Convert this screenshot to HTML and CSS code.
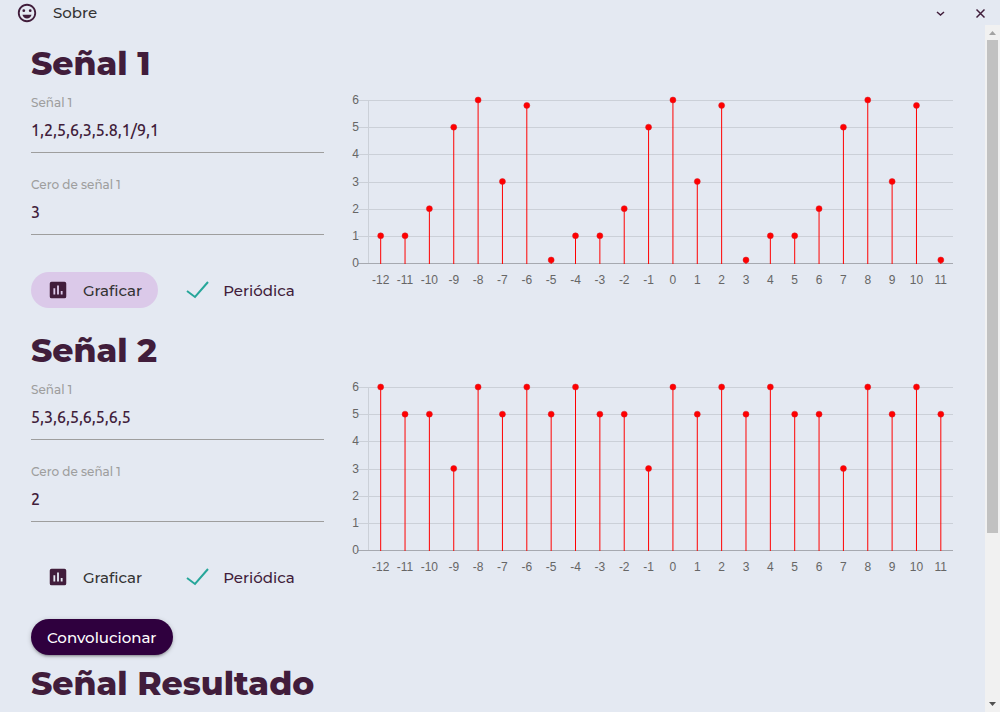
FILE: index.html
```html
<!DOCTYPE html>
<html lang="es">
<head>
<meta charset="utf-8">
<meta name="viewport" content="width=device-width, initial-scale=1">
<title>Convolución de señales</title>
<link rel="stylesheet" href="styles.css">
</head>
<body>
<header class="titlebar">
  <button class="about" type="button">
    <svg class="icon" viewBox="0 0 24 24" aria-hidden="true"><path d="M12 2C6.500 2 2 6.500 2 12s4.500 10 10 10 10-4.500 10-10S17.500 2 12 2zm0 18a8 8 0 1 1 0-16 8 8 0 0 1 0 16z"/><circle cx="8.500" cy="9.500" r="1.500"/><circle cx="15.500" cy="9.500" r="1.500"/><path d="M7 14h10c-.7 2.400-2.600 4-5 4s-4.300-1.600-5-4z"/></svg>
    <span>Sobre</span>
  </button>
  <div class="window-actions">
    <button class="window-button" type="button" aria-label="Minimizar"><svg viewBox="0 0 16 16"><path d="M5 7l3.500 3L12 7"/></svg></button>
    <button class="window-button" type="button" aria-label="Cerrar"><svg viewBox="0 0 16 16"><path d="m4.500 4.500 8 8M12.500 4.500l-8 8"/></svg></button>
  </div>
</header>
<div class="viewport">
  <main class="content">
    <section class="signal">
      <form class="controls">
        <h1 class="heading">Señal 1</h1>
        <div class="field">
          <label for="signal-1">Señal 1</label>
          <input id="signal-1" type="text" value="1,2,5,6,3,5.8,1/9,1">
        </div>
        <div class="field">
          <label for="zero-1">Cero de señal 1</label>
          <input id="zero-1" type="text" value="3">
        </div>
        <div class="actions">
          <button class="plot-button plot-button-active" type="button">
            <svg class="icon" viewBox="0 0 24 24" aria-hidden="true"><path fill-rule="evenodd" d="M19 3H5a2 2 0 0 0-2 2v14a2 2 0 0 0 2 2h14a2 2 0 0 0 2-2V5a2 2 0 0 0-2-2zM9 17H7v-7h2v7zm4 0h-2V7h2v10zm4 0h-2v-4h2v4z"/></svg>
            <span>Graficar</span>
          </button>
          <label class="check">
            <input type="checkbox" checked>
            <svg viewBox="0 0 24 18" aria-hidden="true"><path d="m1 10 8 6L22 1"/></svg>
            <span>Periódica</span>
          </label>
        </div>
      </form>
      <div class="plot"><svg class="chart" role="img" aria-label="Gráfica de la señal 1" data-values="1,2,5,6,3,5.8,0.11,1" data-zero="3"></svg></div>
    </section>
    <section class="signal">
      <form class="controls">
        <h1 class="heading">Señal 2</h1>
        <div class="field">
          <label for="signal-2">Señal 1</label>
          <input id="signal-2" type="text" value="5,3,6,5,6,5,6,5">
        </div>
        <div class="field">
          <label for="zero-2">Cero de señal 1</label>
          <input id="zero-2" type="text" value="2">
        </div>
        <div class="actions">
          <button class="plot-button" type="button">
            <svg class="icon" viewBox="0 0 24 24" aria-hidden="true"><path fill-rule="evenodd" d="M19 3H5a2 2 0 0 0-2 2v14a2 2 0 0 0 2 2h14a2 2 0 0 0 2-2V5a2 2 0 0 0-2-2zM9 17H7v-7h2v7zm4 0h-2V7h2v10zm4 0h-2v-4h2v4z"/></svg>
            <span>Graficar</span>
          </button>
          <label class="check">
            <input type="checkbox" checked>
            <svg viewBox="0 0 24 18" aria-hidden="true"><path d="m1 10 8 6L22 1"/></svg>
            <span>Periódica</span>
          </label>
        </div>
      </form>
      <div class="plot"><svg class="chart" role="img" aria-label="Gráfica de la señal 2" data-values="5,3,6,5,6,5,6,5" data-zero="2"></svg></div>
    </section>
    <section class="result">
      <button class="convolve" type="button">Convolucionar</button>
      <h1 class="heading">Señal Resultado</h1>
    </section>
  </main>
  <div class="scrollbar" aria-hidden="true">
    <svg class="arrow arrow-up" viewBox="0 0 15 15"><path d="m4 10 3.500-4 3.500 4z"/></svg>
    <div class="track"><div class="thumb"></div></div>
    <svg class="arrow" viewBox="0 0 15 15"><path d="m4 5 3.500 4L11 5z"/></svg>
  </div>
</div>
<script src="chart.js"></script>
</body>
</html>
```
FILE: styles.css
```css
* { box-sizing: border-box; }

body {
  margin: 0;
  height: 100vh;
  display: flex;
  flex-direction: column;
  overflow: hidden;
  background: #e4e9f2;
  color: #411d3b;
  font-family: Montserrat, Inter, sans-serif;
  font-size: 15px;
  font-weight: 500;
}

button, input { font: inherit; color: inherit; }

button {
  border: 0;
  background: none;
  cursor: pointer;
}

.icon {
  width: 22px;
  height: 22px;
  flex: none;
  fill: #411d3b;
}

.titlebar {
  flex: none;
  height: 25px;
  padding: 0 12px 0 16px;
  display: flex;
  align-items: center;
  justify-content: space-between;
}

.about {
  display: flex;
  align-items: center;
  gap: 15px;
  padding: 0;
  color: #343434;
}

.window-actions {
  display: flex;
  gap: 24px;
}

.window-button {
  width: 16px;
  height: 16px;
  padding: 0;
}

.window-button svg {
  display: block;
  fill: none;
  stroke: #411d3b;
  stroke-width: 1.5;
}

.viewport {
  flex: 1;
  min-height: 0;
  display: flex;
}

.content {
  flex: 1;
  min-width: 0;
  overflow-y: auto;
  scrollbar-width: none;
  padding: 20px 20px 160px;
}

.signal {
  display: grid;
  grid-template-columns: 1fr 2fr;
  margin-bottom: 24px;
}

.controls, .plot, .result { padding: 0 11px; }

.heading {
  margin: 0;
  font-size: 33px;
  line-height: 36px;
  font-weight: 800;
}

.controls .heading { margin-bottom: 14px; }

.field {
  display: flex;
  flex-direction: column;
  margin-bottom: 24px;
}

.field label {
  font-size: 12px;
  line-height: 16px;
  color: #9e9e9e;
}

.field input {
  width: 100%;
  height: 42px;
  padding: 0 0 4px;
  border: 0;
  border-bottom: 1px solid #9e9e9e;
  border-radius: 0;
  outline: 0;
  background: none;
  font-family: Ubuntu, "Noto Sans", sans-serif;
  font-size: 16px;
  font-weight: 500;
}

.actions {
  display: flex;
  align-items: center;
  gap: 28px;
  padding-top: 13px;
}

.plot-button {
  height: 36px;
  padding: 0 16px;
  display: flex;
  align-items: center;
  gap: 14px;
  border-radius: 18px;
  color: #343434;
}

.plot-button-active { background: #dbc9e9; }

.check {
  display: flex;
  align-items: center;
  gap: 13px;
  cursor: pointer;
}

.check input {
  position: absolute;
  opacity: 0;
}

.check svg {
  width: 24px;
  height: 18px;
  fill: none;
  stroke: #26a69a;
  stroke-width: 2;
}

.check input:not(:checked) + svg { visibility: hidden; }

.plot { padding-top: 46px; min-width: 0; }

.chart {
  display: block;
  width: 100%;
  height: 200px;
  font-family: "Liberation Sans", Arial, sans-serif;
  font-size: 12px;
  font-weight: 400;
}

.chart text { fill: #666; }
.chart .grid { stroke: #cbd0d8; }
.chart .baseline { stroke: #a6a9b0; }
.chart .stem { stroke: #f00; }
.chart .dot { fill: #f00; stroke: #d61f2b; stroke-width: 0.5; }

.convolve {
  display: block;
  height: 36px;
  margin-bottom: 10px;
  padding: 0 16px;
  border-radius: 18px;
  background: #2f003e;
  color: #fff;
  box-shadow: 0 2px 2px rgba(0, 0, 0, 0.14), 0 3px 1px -2px rgba(0, 0, 0, 0.12), 0 1px 5px rgba(0, 0, 0, 0.2);
}

.scrollbar {
  flex: none;
  width: 15px;
  display: flex;
  flex-direction: column;
  background: #f1f1f1;
}

.arrow {
  width: 15px;
  height: 15px;
  fill: #505050;
}

.arrow-up { fill: #a3a3a3; }

.track {
  flex: 1;
  padding: 0 2px;
}

.thumb {
  height: 75%;
  background: #c1c1c1;
}
```
FILE: chart.js
```js
const SVG_NS = "http://www.w3.org/2000/svg";
const FIRST = -12;
const COUNT = 24;
const TOP = 9;
const BOTTOM = 172;
const LEFT = 22;
const MAX = 6;

function add(svg, name, attributes, text) {
  const node = document.createElementNS(SVG_NS, name);
  for (const key in attributes) node.setAttribute(key, attributes[key]);
  if (text !== undefined) node.textContent = text;
  svg.appendChild(node);
}

function draw(svg) {
  const values = svg.dataset.values.split(",").map(Number);
  const zero = Number(svg.dataset.zero);
  const right = svg.clientWidth - 1;
  const axis = LEFT + 0.5;
  const step = (right - axis) / COUNT;
  const yOf = value => BOTTOM - value * (BOTTOM - TOP) / MAX;
  svg.replaceChildren();

  for (let level = 0; level <= MAX; level++) {
    const y = Math.round(yOf(level)) + 0.5;
    add(svg, "line", { x1: LEFT - 10, x2: right, y1: y, y2: y, class: level ? "grid" : "baseline" });
    add(svg, "text", { x: LEFT - 9, y: y + 3, "text-anchor": "end" }, level);
  }
  add(svg, "line", { x1: axis, x2: axis, y1: TOP, y2: BOTTOM, class: "grid" });

  for (let i = 0; i < COUNT; i++) {
    const n = FIRST + i;
    const size = values.length;
    const value = values[(((n + zero) % size) + size) % size];
    const x = axis + step * (i + 0.5);
    add(svg, "line", { x1: x, x2: x, y1: yOf(value), y2: BOTTOM + 1, class: "stem" });
    add(svg, "circle", { cx: x, cy: yOf(value), r: 3, class: "dot" });
    add(svg, "text", { x: x, y: BOTTOM + 21, "text-anchor": "middle" }, n);
  }
}

function drawAll() {
  document.querySelectorAll(".chart").forEach(draw);
}

window.addEventListener("resize", drawAll);
drawAll();
```
